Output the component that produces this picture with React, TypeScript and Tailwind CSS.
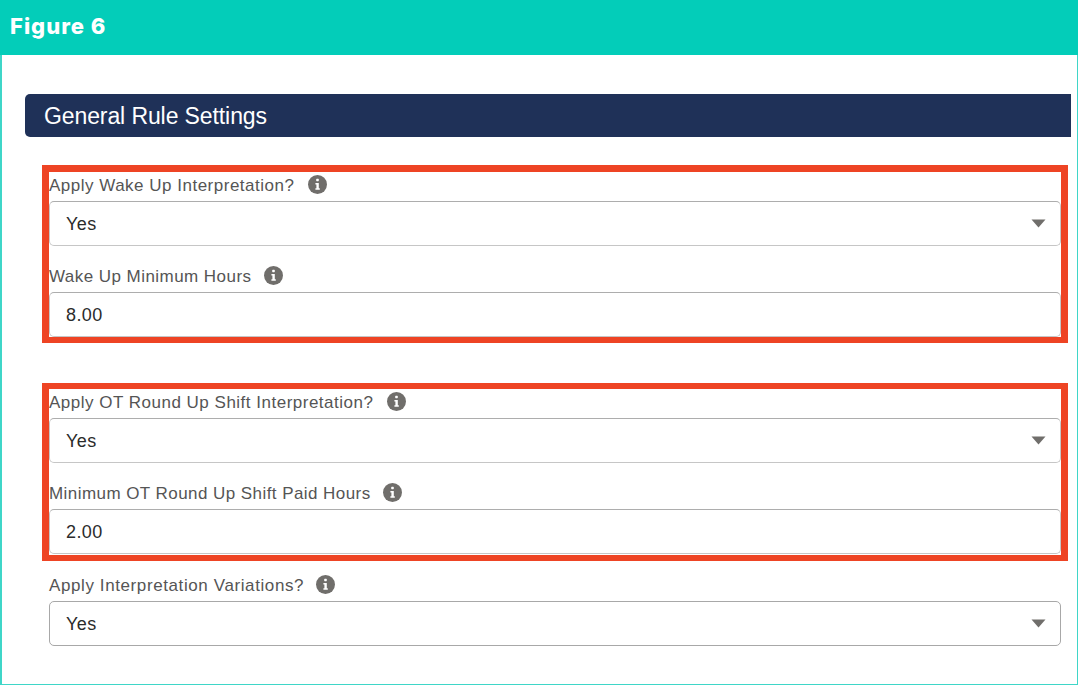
import React from 'react';

const InfoIcon = () => (
  <svg width="19" height="19" viewBox="0 0 19 19" className="shrink-0">
    <circle cx="9.5" cy="9.5" r="9.5" fill="#706e6b" />
    <rect x="8.2" y="3.8" width="2.6" height="2.4" rx="0.6" fill="#fff" />
    <path d="M7.4 8h3.4v5.2h1v1.6H7.4v-1.6h1V9.6h-1z" fill="#fff" />
  </svg>
);

const Caret = () => (
  <svg width="15" height="9" viewBox="0 0 15 9" className="shrink-0">
    <path d="M0.5 0.5h14L7.5 8.5z" fill="#706e6b" />
  </svg>
);

const Field = ({
  label,
  value,
  select,
  dark,
  labelClass = 'gap-[14px] tracking-[0.5px]',
}: {
  label: string;
  value: string;
  select?: boolean;
  dark?: boolean;
  labelClass?: string;
}) => (
  <div className="flex flex-col">
    <div className={`flex h-[29px] items-center pb-[4px] text-[17px] text-[#555] ${labelClass}`}>
      <span className="pt-[2px]">{label}</span>
      <InfoIcon />
    </div>
    <div
      className={`flex h-[45px] items-center justify-between rounded-[5px] border pl-[16px] pr-[14px] text-[18px] tracking-[0.4px] text-[#2b2b2b] ${
        dark ? 'border-[#a8a8a8]' : 'border-[#c6c6c6] border-t-[#adadad]'
      }`}
    >
      <span className="pt-[2px]">{value}</span>
      {select && <Caret />}
    </div>
  </div>
);

export default function App() {
  return (
    <div className="flex h-[685px] w-[1078px] flex-col overflow-hidden bg-white font-['Liberation_Sans',sans-serif]">
      <header className="flex h-[55px] shrink-0 items-center bg-[#03cdb9] pb-[2px] pl-[10px]">
        <h1 className="font-['Inter',sans-serif] text-[22px] font-extrabold tracking-[1px] text-white">Figure 6</h1>
      </header>
      <main className="flex-1 border-y-0 border-l-2 border-r border-b border-[#3fd6c8] pl-[23px] pr-[6px] pt-[39px]">
        <h2 className="flex h-[43px] items-center rounded-l-[5px] bg-[#1f3158] pl-[19px] pt-[2px] text-[23px] tracking-[-0.1px] text-white">
          General Rule Settings
        </h2>
        <div className="ml-[17px] mr-[3px] mt-[28px] flex flex-col gap-[40px]">
          <section className="flex flex-col gap-[17px] border-[7px] border-b-[6px] border-[#ee4424]">
            <Field label="Apply Wake Up Interpretation?" value="Yes" select />
            <Field
              label="Wake Up Minimum Hours"
              value="8.00"
              labelClass="gap-[13px] tracking-[0.45px]"
            />
          </section>
          <section className="flex flex-col gap-[17px] border-[7px] border-t-[6px] border-b-[6px] border-[#ee4424] pb-[1px]">
            <Field label="Apply OT Round Up Shift Interpretation?" value="Yes" select />
            <Field
              label="Minimum OT Round Up Shift Paid Hours"
              value="2.00"
              labelClass="gap-[12px] tracking-[0.44px]"
            />
          </section>
        </div>
        <div className="ml-[24px] mr-[10px] mt-[11px]">
          <Field
            label="Apply Interpretation Variations?"
            value="Yes"
            select
            dark
            labelClass="gap-[12px] tracking-[0.6px]"
          />
        </div>
      </main>
    </div>
  );
}
